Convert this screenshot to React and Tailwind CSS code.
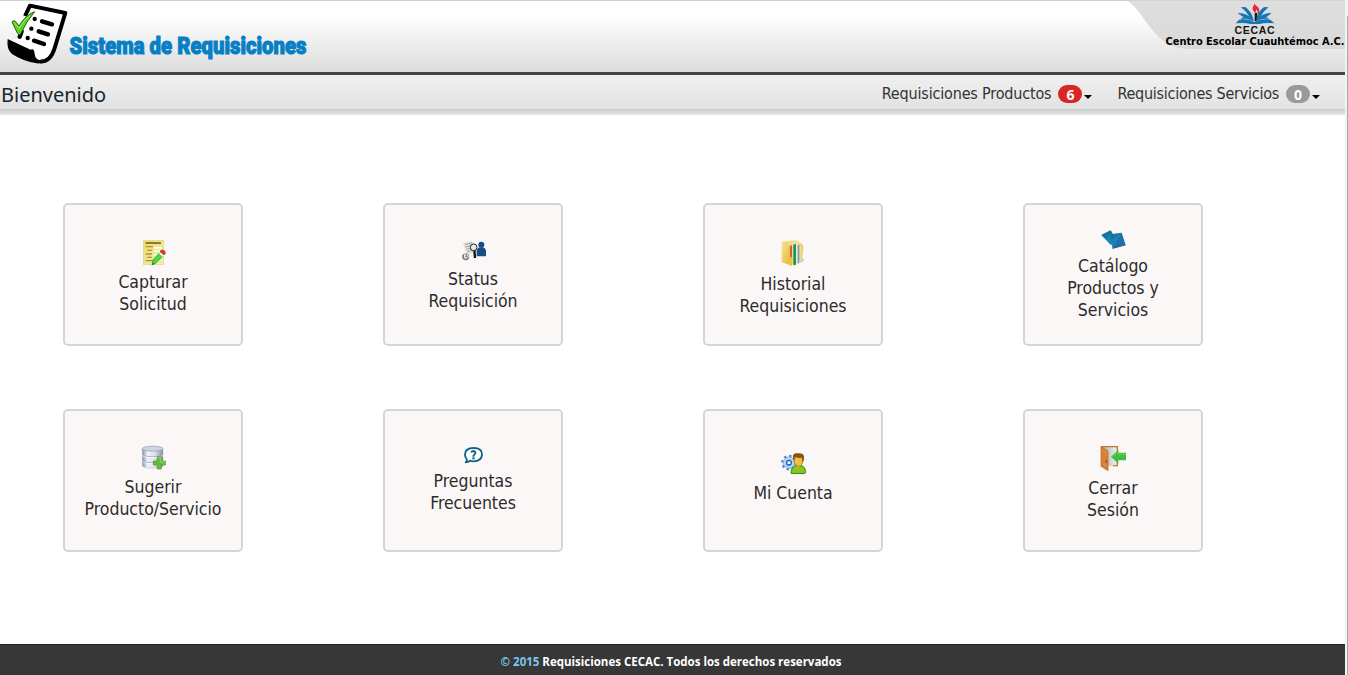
import React from "react";

const CaptureIcon = () => (
  <svg viewBox="0 0 78 78" className="size-[26px]">
    <defs>
      <linearGradient id="note" x1="0" y1="0" x2="1" y2="1">
        <stop offset="0" stopColor="#f1dc62" />
        <stop offset="1" stopColor="#eef0b4" />
      </linearGradient>
    </defs>
    <rect x="10" y="1" width="61" height="73" fill="url(#note)" stroke="#d9d79a" strokeWidth="2" />
    <rect x="17" y="6" width="46" height="6" fill="#8d7a2c" />
    <path d="M42 20h22v6H42zM42 31h22v6H42zM42 42h14v5H42z" fill="#fffef0" />
    <path d="M17 20h22M22 31h14M17 42h19M22 52h14M17 62h26" stroke="#a5924a" strokeWidth="4" />
    <path d="M62 34l12 9-26 26-12 6 3-15z" fill="#4fd548" stroke="#259c2b" strokeWidth="2" />
    <path d="M62 31c6-4 16 1 15 9l-5 6-13-10z" fill="#d43b22" />
    <path d="M59 36l13 10-4 4-12-10z" fill="#f3f3f3" />
    <path d="M36 75l2-8 6 5z" fill="#287a26" />
  </svg>
);

const StatusIcon = () => (
  <svg viewBox="0 0 78 78" className="size-[26px]">
    <path d="M9 10l28-7 12 34-29 7z" fill="#dfe3d9" />
    <path d="M15 14l21-6M17 21l15-4M19 28l12-3M21 35l15-4" stroke="#a0a698" strokeWidth="3" />
    <circle cx="64" cy="14" r="9" fill="#174f83" />
    <path d="M50 49V34q0-9 9-12h10q9 3 9 12v15z" fill="#174f83" />
    <path d="M43 30l2 24" stroke="#111" strokeWidth="7" />
    <circle cx="41" cy="22" r="10" fill="#e8eeee" stroke="#222" strokeWidth="3" />
    <circle cx="17" cy="50" r="9" fill="#eee" stroke="#b5b5b5" strokeWidth="4" />
    <path d="M10 45q-3 8 3 12 8 4 13-3" fill="none" stroke="#4d4d4d" strokeWidth="3" />
    <path d="M17 50l3-7M17 50l6 1" stroke="#444" strokeWidth="2.500" />
  </svg>
);

const HistoryIcon = () => (
  <svg viewBox="0 0 78 78" className="size-[26px]">
    <defs>
      <linearGradient id="folder" x1="0" y1="0" x2="1" y2="1">
        <stop offset="0" stopColor="#f9e49a" />
        <stop offset="1" stopColor="#e4b730" />
      </linearGradient>
    </defs>
    <path d="M58 70l15-8-8-14z" fill="#ccc8c2" />
    <path d="M16 4l34-3 8 6 8 3v48L43 77z" fill="#f2dc90" />
    <path d="M62 13q8 3 6 14l-4 26" fill="none" stroke="#e8c868" strokeWidth="4" />
    <path d="M29 18l8-3v56l-8 2z" fill="#e45735" />
    <path d="M37 14l3-1v60l-3 1z" fill="#e8e8dd" />
    <path d="M40 14l8-2v62l-8 2z" fill="#139b4a" />
    <path d="M48 12l5 1v60l-5 1z" fill="#e8f1ef" />
    <path d="M53 15l5-1v54l-5 4z" fill="#8699a1" />
    <path d="M5 5l13-2 12 14v58L5 67z" fill="url(#folder)" />
    <path d="M24 45l13 9v24l-13-4z" fill="#e9c040" />
  </svg>
);

const CatalogIcon = () => (
  <svg viewBox="0 0 78 78" className="size-[26px]">
    <defs>
      <linearGradient id="book" x1="0" y1="0" x2="1" y2="1">
        <stop offset="0" stopColor="#14749e" />
        <stop offset="1" stopColor="#246db0" />
      </linearGradient>
    </defs>
    <path d="M4 21L32 7l16 27-15 18z" fill="#1585b5" />
    <path d="M4 21L32 7l5 9-20 17z" fill="#0e6d96" opacity=".55" />
    <path d="M31 19l34-5 12 37-39 11z" fill="url(#book)" />
    <path d="M65 14L33 36l5 26z" fill="#2388b6" opacity=".65" />
    <path d="M38 61l39-10" stroke="#145a8c" strokeWidth="2" />
  </svg>
);

const SuggestIcon = () => (
  <svg viewBox="0 0 78 78" className="size-[26px]">
    <defs>
      <linearGradient id="disk">
        <stop offset="0" stopColor="#8490b0" />
        <stop offset=".25" stopColor="#eef1f7" />
        <stop offset=".6" stopColor="#dce1eb" />
        <stop offset="1" stopColor="#858ea9" />
      </linearGradient>
    </defs>
    <path d="M7 11v50q0 9 31 9t31-9V11z" fill="url(#disk)" stroke="#9aa3b8" strokeWidth="1" />
    <ellipse cx="38" cy="11" rx="31" ry="7.500" fill="#cfd5e0" stroke="#8c96ad" strokeWidth="2" />
    <path d="M7 28q4 7 31 7t31-7M7 46q4 7 31 7t31-7" fill="none" stroke="#a3abc0" strokeWidth="2.500" />
    <path d="M7 31q4 7 31 7t31-7M7 49q4 7 31 7t31-7" fill="none" stroke="#fff" strokeWidth="2" />
    <path d="M52 35h12v13h12v12H64v12H52V60H40V48h12z" fill="#65b93c" stroke="#4a9a2c" strokeWidth="2" />
    <path d="M55 38h6v13h13" fill="none" stroke="#97d675" strokeWidth="3" />
  </svg>
);

const QuestionIcon = () => (
  <svg viewBox="0 0 78 78" className="size-[26px]">
    <path d="M17 58q5-5 3-10-5-6-5-13 0-20 26-20t25 20-26 20q-6 0-10-2-5 5-13 5z" fill="#fff" stroke="#0d6187" strokeWidth="5.500" strokeLinejoin="round" />
    <path d="M34 29q1-5 7-5 6 1 5 7-1 3-4 5-2 2-2 5" fill="none" stroke="#176087" strokeWidth="5.500" />
    <rect x="37" y="43" width="7" height="6" fill="#176087" />
  </svg>
);

const AccountIcon = () => (
  <svg viewBox="0 0 78 78" className="size-[26px]">
    <circle cx="27" cy="32" r="20" fill="none" stroke="#4684cf" strokeWidth="7" strokeDasharray="7 8.700" />
    <circle cx="27" cy="32" r="17" fill="#b5d3f4" stroke="#6b9dd8" strokeWidth="2" />
    <circle cx="27" cy="32" r="7" fill="#faf7f7" stroke="#175dac" strokeWidth="4" />
    <path d="M33 64q0-20 15-24l8 5 8-5q12 5 13 19 0 5-5 6z" fill="#83c81e" stroke="#348718" strokeWidth="3" />
    <path d="M46 38h17l-8 12z" fill="#e8a934" />
    <path d="M42 14q0-8 13-8t14 9v12q-2 14-13 16-12-2-14-16z" fill="#f1bd43" stroke="#9b691e" strokeWidth="2" />
    <path d="M39 19Q36 4 50 4q20-3 22 9v10l-5 7-1-13q-12 3-19-2-3 3-4 12z" fill="#865516" />
  </svg>
);

const LogoutIcon = () => (
  <svg viewBox="0 0 78 78" className="size-[26px]">
    <defs>
      <linearGradient id="doorway">
        <stop offset="0" stopColor="#a9a9a9" />
        <stop offset="1" stopColor="#f3f3f3" />
      </linearGradient>
    </defs>
    <path d="M4 1h48v60H25z" fill="url(#doorway)" />
    <path d="M3 2h49v57H39" fill="none" stroke="#c47332" strokeWidth="4" />
    <path d="M3 2l21 13v59L3 61z" fill="#d98035" stroke="#b36125" strokeWidth="2" />
    <path d="M8 13l12 7M8 54l12 7" stroke="#ea9a4c" strokeWidth="3" />
    <path d="M19 43v6" stroke="#613315" strokeWidth="3" />
    <path d="M33 32l22-21v9h23v23H55v10z" fill="#43bd3e" />
    <path d="M37 32l18-15v8h23" fill="none" stroke="#68d463" strokeWidth="3" />
  </svg>
);

const cards = [
  { lines: ["Capturar", "Solicitud"], Icon: CaptureIcon, pad: "pt-[35px]", gap: "mb-[5px]" },
  { lines: ["Status", "Requisición"], Icon: StatusIcon, pad: "pt-[35px]", gap: "mb-[2px]" },
  { lines: ["Historial", "Requisiciones"], Icon: HistoryIcon, pad: "pt-[35px]", gap: "mb-[7px]" },
  { lines: ["Catálogo", "Productos y", "Servicios"], Icon: CatalogIcon, pad: "pt-[23px]", gap: "mb-[1px]" },
  { lines: ["Sugerir", "Producto/Servicio"], Icon: SuggestIcon, pad: "pt-[34px]", gap: "mb-[5px]" },
  { lines: ["Preguntas", "Frecuentes"], Icon: QuestionIcon, pad: "pt-[32px]", gap: "mb-[1px]" },
  { lines: ["Mi Cuenta"], Icon: AccountIcon, pad: "pt-[41px]", gap: "mb-[4px]" },
  { lines: ["Cerrar", "Sesión"], Icon: LogoutIcon, pad: "pt-[35px]", gap: "mb-[5px]" },
];

function Card({ lines, Icon, pad, gap }) {
  return (
    <button className={`flex h-[143px] w-[180px] flex-col items-center rounded-[5px] border-2 border-[#d3d5dc] bg-[#fbf7f7] ${pad}`}>
      <span className={gap}><Icon /></span>
      {lines.map((l) => (
        <span key={l} className="whitespace-nowrap font-['DejaVu_Sans_Condensed','DejaVu_Sans',sans-serif] text-[17.5px] leading-[22px] tracking-[-0.02px] text-[#2b2b2b] [font-stretch:condensed]">{l}</span>
      ))}
    </button>
  );
}

const DocumentLogo = () => (
  <svg viewBox="0 0 210 200" className="h-[66.67px] w-[70px] shrink-0">
    <path d="M88 16l108 21-32 107q-12 43-45 41-16-1-17-24-2-15-13-11L26 122l34-7z" fill="#fff" />
    <path d="M75 48L90 17l106 22-32 105q-12 41-43 41" fill="none" stroke="#000" strokeWidth="12" strokeLinejoin="round" />
    <path d="M23 117l69 32q10-5 12 12 1 16 14 19l19-1q-10 13-27 11-40-6-74-28-17-13-13-45z" fill="#000" />
    <path d="M126 64l30 9M116 94l28 9M102 122l30 10" stroke="#000" strokeWidth="13" strokeLinecap="round" />
    <path d="M104 57h.1M94 86h.1M83 114h.1M59 110l6-16" stroke="#000" strokeWidth="13" strokeLinecap="round" />
    <path d="M36 66q5-7 10-2l11 14q18-32 47-43-24 28-43 68-4 3-9-4z" fill="#5bd321" stroke="#246012" strokeWidth="3" />
    <path d="M42 68l15 17q14-24 33-38" fill="none" stroke="#a0ee60" strokeWidth="3" />
  </svg>
);

const SchoolLogo = () => (
  <svg viewBox="0 0 120 69" className="h-[23px] w-[40px]">
    <path d="M2 67l10-11q28-4 46 7 22-11 48-7l12 11q-30-3-43 2H46Q30 64 2 67z" fill="#1477b5" />
    <path d="M17 19l14-1q19 13 26 42-12-9-29-9 7-2 17 1Q37 33 17 19zM101 19l-14-1Q68 31 62 60q12-9 30-9-7-2-17 1 7-19 26-33z" fill="#1477b5" />
    <path d="M10 37q28 0 44 22-18-9-36-5l9-5zM108 37q-28 0-43 22 18-9 36-5l-9-5z" fill="#1477b5" stroke="#1477b5" strokeWidth="2" />
    <path d="M59 35l8 1-3 25h-5z" fill="#111" />
    <path d="M58 2q-1 9 10 15 10 11 0 23 2-10-4-15 0 6-4 10-12-11-5-19 5-6 3-14z" fill="#e52735" />
  </svg>
);

function Menu({ label, count, color, tracking }) {
  return (
    <button className="flex items-center">
      <span className={`whitespace-nowrap font-['DejaVu_Sans_Condensed','DejaVu_Sans',sans-serif] text-[16px] leading-[20px] text-[#333] [font-stretch:condensed] ${tracking}`}>{label}</span>
      <span className={`ml-[7px] flex h-[18px] w-6 items-center justify-center rounded-full pt-px font-['Open_Sans',sans-serif] text-[14px] font-bold text-white ${color}`}>{count}</span>
      <span className="ml-[2px] mt-[6px] border-x-4 border-t-4 border-x-transparent border-t-black" />
    </button>
  );
}

export default function App() {
  return (
    <div className="flex h-[675px] w-[1348px] overflow-hidden bg-white">
      <div className="flex w-[1345px] flex-col">
        <header className="flex h-[75px] items-start justify-between border-b-[3px] border-t border-b-[#444] border-t-[#d2d2d2] bg-linear-to-b from-white from-20% to-[#dcdcdc]">
          <div className="flex">
            <div className="-mt-px"><DocumentLogo /></div>
            <svg className="-ml-1 mt-[25px] h-[40px] w-[250px] overflow-visible" viewBox="0 0 250 40">
              <text x="3.500" y="28" textLength="237" lengthAdjust="spacingAndGlyphs" className="fill-[#087fc4] stroke-[#087fc4] font-['Roboto',sans-serif] text-[24px] font-black" strokeWidth="1.100">Sistema de Requisiciones</text>
            </svg>
          </div>
          <div className="grid h-[48px] w-[217px]">
            <svg viewBox="0 0 217 48" className="col-start-1 row-start-1 h-[48px] w-[217px]">
              <defs>
                <linearGradient id="corner" x2="0" y2="1"><stop stopColor="#dedede" /><stop offset="1" stopColor="#d9d9d9" /></linearGradient>
              </defs>
              <path d="M0 0h217v48H63C45 48 36 42 27 32 17 21 11 8 0 0z" fill="url(#corner)" />
            </svg>
            <div className="col-start-1 row-start-1 flex flex-col">
              <div className="ml-[107px] flex w-10 flex-col items-center">
                <SchoolLogo />
                <svg viewBox="0 0 42 11" className="h-[11px] w-[42px]">
                  <text x="0.500" y="9.500" textLength="40" className="fill-[#161616] font-['Liberation_Sans',sans-serif] text-[10.5px] font-bold">CECAC</text>
                </svg>
              </div>
              <svg viewBox="0 0 180 14" className="ml-[37px] h-[14px] w-[180px]">
                <text x="0.500" y="10" textLength="179" className="fill-black font-['DejaVu_Sans_Condensed','DejaVu_Sans',sans-serif] text-[11px] font-bold [font-stretch:condensed]">Centro Escolar Cuauhtémoc A.C.</text>
              </svg>
            </div>
          </div>
        </header>
        <nav className="flex h-[34px] shrink-0 items-center justify-between bg-linear-to-b from-[#f0f0f0] to-[#e2e2e2] pl-px pr-[25px]">
          <h1 className="mt-[6px] font-['Noto_Sans',sans-serif] text-[20px] leading-[28px] text-[#16252b]">Bienvenido</h1>
          <div className="mt-[4px] flex gap-[25px]">
            <Menu label="Requisiciones Productos" count="6" color="bg-[#db2525]" tracking="tracking-[-0.17px]" />
            <Menu label="Requisiciones Servicios" count="0" color="bg-[#999]" tracking="tracking-[-0.25px]" />
          </div>
        </nav>
        <div className="h-[6px] shrink-0 bg-linear-to-b from-[#cbcbcb] to-[#e8e8e8]" />
        <main className="grid h-[529px] shrink-0 grid-cols-[repeat(4,180px)] content-start gap-x-[140px] gap-y-[63px] pl-[63px] pt-[88px]">
          {cards.map((c) => <Card key={c.lines[0]} {...c} />)}
        </main>
        <footer className="flex h-[31px] items-center justify-center border-t border-[#222] bg-[#373737] bg-[repeating-conic-gradient(#393939_0_25%,#353535_0_50%)] bg-[length:4px_4px] pt-[3px]">
          <p className="whitespace-nowrap pr-[3px] font-['Open_Sans',sans-serif] text-[11.5px] font-bold leading-[16px] text-white"><span className="text-[#7bc8ed]">© 2015</span> Requisiciones CECAC. Todos los derechos reservados</p>
        </footer>
      </div>
      <div className="flex w-[3px] justify-end bg-[#f3f3f3] pt-4">
        <div className="w-px bg-[#a8a8a8]" />
      </div>
    </div>
  );
}
